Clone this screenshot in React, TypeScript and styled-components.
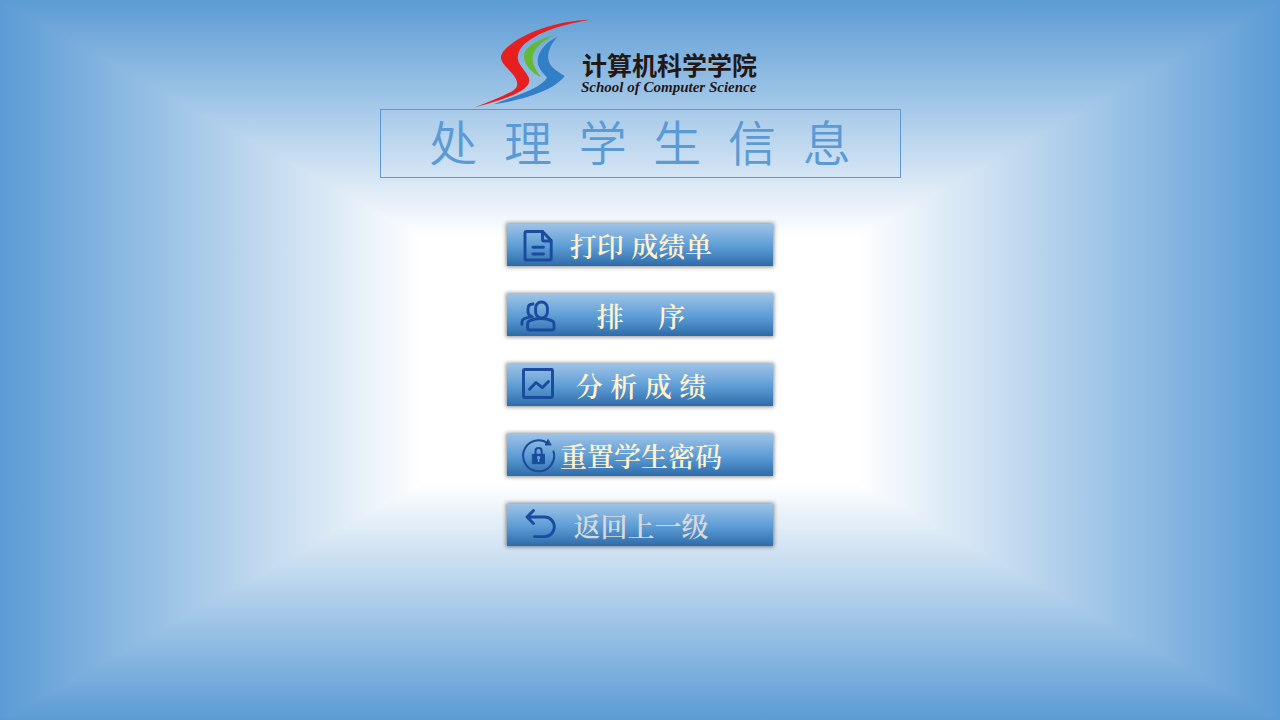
import React from "react";
import styled, { createGlobalStyle } from "styled-components";

const GlobalStyle = createGlobalStyle`
  *, *::before, *::after { box-sizing: border-box; }
  body { margin: 0; }
`;

const FADE = "#5b9bd5 0%, #ffffff 33%, #ffffff 67%, #5b9bd5 100%";

/* Rectangular fade: a horizontal gradient, crossed by a vertical one in the top and bottom wedges. */
const Page = styled.main`
  position: relative;
  isolation: isolate;
  display: flex;
  flex-direction: column;
  align-items: center;
  min-height: 100vh;
  padding: 19px 16px;
  font-family: "Liberation Sans", "Noto Sans CJK SC", sans-serif;
  background: linear-gradient(to right, ${FADE});

  &::before {
    content: "";
    position: absolute;
    inset: 0;
    z-index: -1;
    background: linear-gradient(to bottom, ${FADE});
    clip-path: polygon(0 0, 100% 0, 0 100%, 100% 100%);
  }
`;

const Header = styled.header`
  display: flex;
  align-items: flex-start;
  width: 100%;
  max-width: 520px;
  padding-left: 95px;
`;

const Emblem = styled.svg`
  flex: none;
  width: 116px;
  height: 90px;
`;

const School = styled.div`
  display: flex;
  flex-direction: column;
  margin-left: -10px;
  padding-top: 33px;
  color: #231815;
  white-space: nowrap;
`;

const SchoolName = styled.span`
  padding-left: 1px;
  font: 700 25px/28px "Liberation Sans", "Noto Sans CJK SC", sans-serif;
`;

const SchoolLatin = styled.span`
  font: italic 700 15px/14px "Liberation Serif", serif;
`;

const Title = styled.h1`
  width: 100%;
  max-width: 521px;
  margin: 0 0 46px;
  padding-top: 2px;
  border: 1px solid #5b9bd5;
  color: #5b9bd5;
  font-size: 48px;
  font-weight: 350;
  line-height: 65px;
  text-align: center;
  white-space: pre;
`;

const Menu = styled.nav`
  display: flex;
  flex-direction: column;
  gap: 28px;
  width: 100%;
  max-width: 266px;
`;

const MenuButton = styled.button<{ $muted?: boolean }>`
  display: grid;
  align-items: center;
  height: 42px;
  padding: 0 13px;
  border: 0;
  background: linear-gradient(to bottom, #9dc3e6, #5b9bd5 55%, #2d6ca8);
  box-shadow: 0 0 4px 1px rgba(0, 0, 0, 0.45);
  color: ${(p) => (p.$muted ? "#d9d9d9" : "#fff2cc")};
  font-family: "Liberation Sans", "Noto Serif CJK SC", "Noto Sans CJK SC", serif;
  font-size: 27px;
  font-weight: 600;
  line-height: 36px;
  cursor: pointer;
`;

const Icon = styled.svg`
  grid-area: 1 / 1;
  width: 36px;
  height: 36px;
  fill: none;
  stroke: #1b4b9c;
  stroke-width: 2.9;
  stroke-linecap: round;
  stroke-linejoin: round;
`;

const ThinLine = styled.path`
  stroke-width: 2;
`;

const SolidShape = styled.path`
  fill: #1b4b9c;
  stroke-width: 1;
`;

const Keyhole = styled.path`
  fill: #6ba3da;
  stroke: none;
`;

const Label = styled.span`
  grid-area: 1 / 1;
  padding: 6px 0 0 2px;
  text-align: center;
  white-space: pre;
`;

const icons = {
  document: (
    <>
      <path d="M6.5 4.5H22.5L31.2 13.5V31.5Q31.2 33 29.8 33H6.5Q5 33 5 31.5V6Q5 4.5 6.5 4.5Z" />
      <path d="M22.5 4.5V12.5Q22.5 14 24 14H31M13 20.3H23.5M13 27H23.5" />
    </>
  ),
  people: (
    <>
      <rect x="15.6" y="5" width="11.8" height="16" rx="5.9" />
      <path d="M7.6 31V27Q7.6 24.5 10 23.6Q15 21.5 21 21.5Q27 21.5 31.5 23.6Q34 24.5 34 27V31Q34 33 32 33H9.6Q7.6 33 7.6 31Z" />
      <path d="M13 7Q8 7 8 12V14.5Q8 18.5 12.3 19.8Q2 21 2 24.5V27.5" />
    </>
  ),
  chart: (
    <>
      <rect x="3.5" y="2.5" width="29" height="28" rx="1" />
      <path d="M9.5 22.2L16 15.5L22.3 20.7L28.5 14.5" />
    </>
  ),
  lock: (
    <>
      <ThinLine d="M33.5 14.5A15.5 15.5 0 1 1 28 6.5" />
      <ThinLine d="M15.5 17V14.2Q15.5 11 18.6 11Q21.7 11 21.7 14.2V17" />
      <SolidShape d="M27.9 2.8L25.2 8H30.8Z" />
      <SolidShape d="M12.7 17.3H24.5V26.7H12.7Z" />
      <Keyhole d="M16.9 20.6A1.7 1.7 0 1 1 19.4 22.1V25H17.8V22.1A1.7 1.7 0 0 1 16.9 20.6Z" />
    </>
  ),
  back: <path d="M13.5 3.5L7 10L13.5 16.5M7 10H24.5A9.7 9.7 0 0 1 24.5 29.6H14.5" />,
};

const items: { icon: keyof typeof icons; label: string; muted?: boolean }[] = [
  { icon: "document", label: "打印 成绩单" },
  { icon: "people", label: "排\u3000 序" },
  { icon: "chart", label: "分 析 成 绩" },
  { icon: "lock", label: "重置学生密码" },
  { icon: "back", label: "返回上一级", muted: true },
];

export default function App() {
  return (
    <>
      <GlobalStyle />
      <Page>
        <Header>
          <Emblem viewBox="44 28 348 270" aria-hidden="true">
            <path
              fill="#e81f1f"
              d="M389 30C300 33 205 62 150 105C130 121 121 133 122 146C124 165 157 188 167 208C175 226 170 237 153 246C122 262 82 279 44 293C90 281 139 266 169 251C194 238 206 226 207 213C207 192 176 170 173 150C170 131 180 113 197 99C242 62 314 43 389 30Z"
            />
            <path
              fill="#63b932"
              d="M284 76C238 86 193 110 191 138C189 162 214 190 242 202C226 182 216 163 217 143C218 117 249 91 284 76Z"
            />
            <path
              fill="#317fc6"
              d="M291 81C258 97 234 123 232 151C231 176 250 190 260 204C241 235 179 253 100 284C153 276 208 263 247 245C277 232 300 217 313 199C292 186 274 176 266 157C258 133 270 105 291 81Z"
            />
          </Emblem>
          <School>
            <SchoolName>计算机科学学院</SchoolName>
            <SchoolLatin lang="en">School of Computer Science</SchoolLatin>
          </School>
        </Header>
        <Title>处  理  学  生  信  息</Title>
        <Menu>
          {items.map((item) => (
            <MenuButton key={item.icon} type="button" $muted={item.muted}>
              <Icon viewBox="0 0 36 36" aria-hidden="true">
                {icons[item.icon]}
              </Icon>
              <Label>{item.label}</Label>
            </MenuButton>
          ))}
        </Menu>
      </Page>
    </>
  );
}
